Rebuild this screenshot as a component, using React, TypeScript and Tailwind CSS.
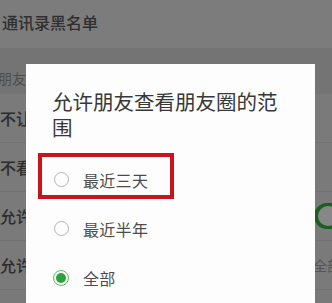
import React from "react";

const font = { fontFamily: '"Noto Sans CJK SC", "Noto Sans", sans-serif' };

const rows = [
  { label: "不让他（她）看我的朋友圈", right: null },
  { label: "不看他（她）的朋友圈", right: null },
  { label: "允许陌生人查看十条朋友圈", right: "switch" },
  { label: "允许朋友查看朋友圈的范围", right: "value" },
];

function Radio({ checked }: { checked?: boolean }) {
  if (checked) {
    return (
      <span className="w-[16px] h-[16px] rounded-full border-[1.5px] border-[#5cbb5f] flex items-center justify-center">
        <span className="w-[10px] h-[10px] rounded-full bg-[#2ea23a]" />
      </span>
    );
  }
  return <span className="w-[15px] h-[15px] rounded-full border-[1.5px] border-[#b4b4b4]" />;
}

export default function App() {
  const options = [
    { label: "最近三天", checked: false },
    { label: "最近半年", checked: false },
    { label: "全部", checked: true },
  ];

  return (
    <div className="relative w-[332px] h-[303px] overflow-hidden bg-[#797979]" style={font}>
      {/* page behind the dimmed overlay */}
      <div className="w-[380px] -ml-[2px]">
        <div className="h-[48px] bg-[#7c7c7c] flex items-center">
          <span className="text-[16px] text-[#2f2f2f] font-medium -mt-[4px] pl-[4px]">通讯录黑名单</span>
        </div>
        <div className="h-[46px] bg-[#747474] flex items-end pb-[5px]">
          <span className="text-[14px] text-[#4e4e4e]">朋友权限</span>
        </div>
        {rows.map((r) => (
          <div key={r.label} className="h-[49px] bg-[#7a7a7a] border-b border-[#727272] flex items-center justify-between pl-[2px] pr-[12px]">
            <span className="text-[16px] text-[#2c2c2c] font-medium">{r.label}</span>
            <div className="w-[52px] flex items-center">
              {r.right === "switch" && (
                <span className="w-[52px] h-[26px] rounded-full bg-[#1b5f20] flex items-center pl-[4px]">
                  <span className="w-[20px] h-[20px] rounded-full bg-[#878787]" />
                </span>
              )}
              {r.right === "value" && <span className="text-[14px] text-[#555] -ml-[1px]">全部</span>}
            </div>
          </div>
        ))}
      </div>

      {/* dialog */}
      <div className="absolute left-[26px] top-[64px] w-[289px] h-[260px] bg-[#fdfdfd] pl-[26px] pr-[30px] pt-[24px]">
        <h2 className="text-[20.5px] leading-[26px] text-[#383838]">允许朋友查看朋友圈的范围</h2>
        <div className="mt-[15px]">
          {options.map((o) => (
            <div key={o.label} className="h-[49px] flex items-center pl-[1px]">
              <div className="w-[16px] flex justify-center">
                <Radio checked={o.checked} />
              </div>
              <span className="ml-[14px] text-[16px] tracking-[0.3px] text-[#4d4d4d]">{o.label}</span>
            </div>
          ))}
        </div>
      </div>

      {/* red annotation box */}
      <div className="absolute left-[38px] top-[153px] w-[136px] h-[46px] border-[4px] border-[#c8141d]" />
    </div>
  );
}
